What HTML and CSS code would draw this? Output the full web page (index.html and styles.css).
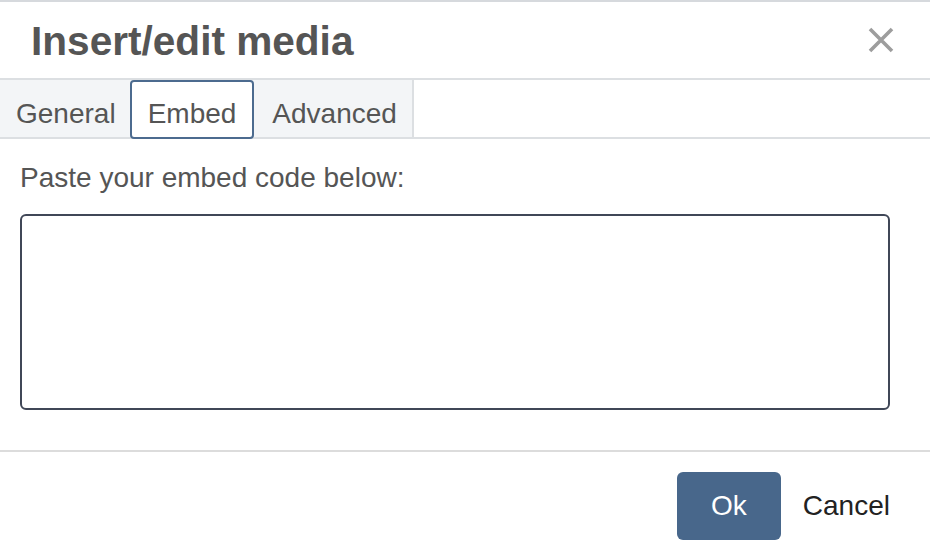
FILE: index.html
```html
<!DOCTYPE html>
<html lang="en">
<head>
<meta charset="utf-8">
<title>Insert/edit media</title>
<link rel="stylesheet" href="styles.css">
</head>
<body>
<div class="dialog">
  <div class="header">
    <h1 class="title">Insert/edit media</h1>
    <button class="close" aria-label="Close">
      <svg width="26" height="26" viewBox="0 0 26 26"><path d="M2 2 L24 24 M24 2 L2 24" stroke="#9d9d9d" stroke-width="3.6" fill="none"/></svg>
    </button>
  </div>
  <div class="tabrow">
    <div class="tabs">
      <div class="tab">General</div>
      <div class="tab active">Embed</div>
      <div class="tab">Advanced</div>
    </div>
  </div>
  <div class="body">
    <label class="label">Paste your embed code below:</label>
    <div class="textarea"></div>
  </div>
  <div class="footer">
    <button class="btn primary">Ok</button>
    <button class="btn secondary">Cancel</button>
  </div>
</div>
</body>
</html>
```

FILE: styles.css
```css
html, body {
  margin: 0;
  padding: 0;
  background: #ffffff;
}
body {
  font-family: "Liberation Sans", Arial, Helvetica, sans-serif;
  color: #555555;
}
.dialog {
  border-top: 2px solid #d6d9dd;
  width: 930px;
}
.header {
  height: 76px;
  display: flex;
  align-items: center;
  justify-content: space-between;
  border-bottom: 2px solid #dcdfe2;
  padding: 0 36px 0 31px;
}
.title {
  margin: 0;
  padding-top: 2px;
  font-size: 40.6px;
  line-height: 40px;
  font-weight: bold;
  color: #555555;
}
.close {
  border: 0;
  background: transparent;
  padding: 0;
  width: 26px;
  height: 26px;
  display: flex;
}
.tabrow {
  display: flex;
  height: 57px;
  border-bottom: 2px solid #dcdfe2;
}
.tabs {
  display: flex;
  background: #f3f5f7;
  border-right: 2px solid #dcdfe2;
  height: 57px;
}
.tab {
  box-sizing: border-box;
  height: 57px;
  padding: 18px 16px 0;
  border: 2px solid transparent;
  font-size: 28px;
  line-height: 28px;
  color: #555555;
}
.tab:first-child {
  padding-left: 14px;
  padding-right: 12px;
}
.tab:last-child {
  padding-right: 13px;
}
.tab.active {
  background: #ffffff;
  border-color: #4c6b8f;
  border-radius: 4px;
  height: 59px;
}
.body {
  padding: 25px 40px 40px 20px;
}
.label {
  display: block;
  font-size: 28px;
  line-height: 28px;
  color: #555555;
  margin-bottom: 22px;
}
.textarea {
  box-sizing: border-box;
  height: 196px;
  width: 870px;
  border: 2px solid #404757;
  border-radius: 6px;
}
.footer {
  border-top: 2px solid #dcdcdc;
  display: flex;
  justify-content: flex-end;
  align-items: center;
  padding: 20px 18px 18px 0;
}
.btn {
  font-family: "Liberation Sans", Arial, Helvetica, sans-serif;
  font-size: 28px;
  height: 68px;
  border: 0;
  background: transparent;
  cursor: pointer;
}
.primary {
  background: #48678b;
  color: #ffffff;
  width: 104px;
  border-radius: 6px;
  padding: 0;
}
.secondary {
  color: #222222;
  padding: 0 22px;
}
```
